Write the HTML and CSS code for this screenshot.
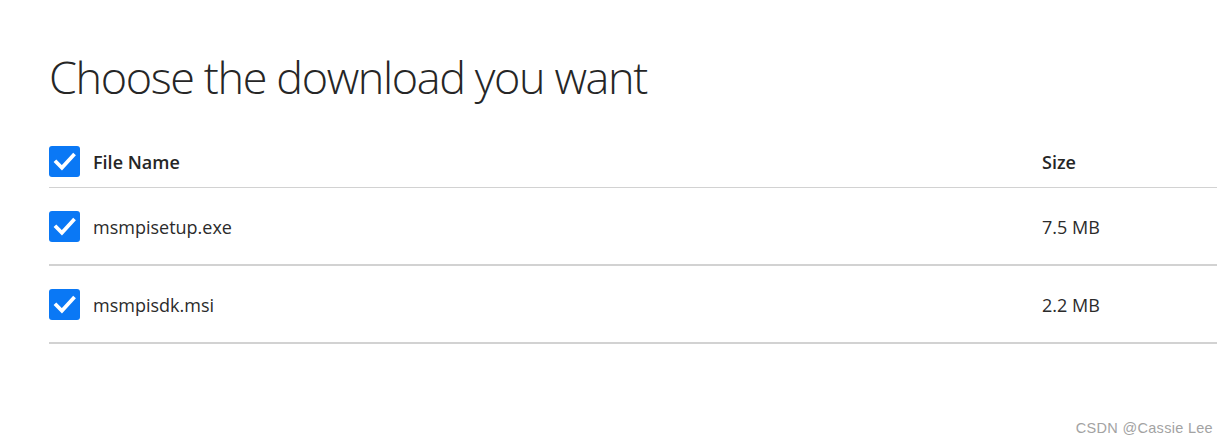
FILE: index.html
```html
<!DOCTYPE html>
<html lang="en">
<head>
<meta charset="utf-8">
<title>Choose the download you want</title>
<link rel="stylesheet" href="styles.css">
</head>
<body>
<main class="page">
  <h1 class="title">Choose the download you want</h1>
  <div class="table">
    <div class="row head">
      <div class="name-cell">
        <span class="check"><svg viewBox="0 0 30 30"><path d="M7 15.5 L12.5 21 L23.5 9" /></svg></span>
        <span class="label">File Name</span>
      </div>
      <div class="size-cell">Size</div>
    </div>
    <div class="row">
      <div class="name-cell">
        <span class="check"><svg viewBox="0 0 30 30"><path d="M7 15.5 L12.5 21 L23.5 9" /></svg></span>
        <span class="label">msmpisetup.exe</span>
      </div>
      <div class="size-cell">7.5 MB</div>
    </div>
    <div class="row">
      <div class="name-cell">
        <span class="check"><svg viewBox="0 0 30 30"><path d="M7 15.5 L12.5 21 L23.5 9" /></svg></span>
        <span class="label">msmpisdk.msi</span>
      </div>
      <div class="size-cell">2.2 MB</div>
    </div>
  </div>
  <div class="watermark">CSDN @Cassie Lee</div>
</main>
</body>
</html>
```

FILE: styles.css
```css
html, body {
  margin: 0;
  padding: 0;
  background: #ffffff;
}

body {
  font-family: "Open Sans", "Noto Sans", sans-serif;
  color: #2f2f2f;
}

.page {
  width: 1228px;
  height: 443px;
  box-sizing: border-box;
  padding: 47px 11px 0 49px;
  display: flex;
  flex-direction: column;
}

.title {
  margin: 0;
  font-family: "Open Sans", "Noto Sans", sans-serif;
  font-weight: 300;
  font-size: 45px;
  line-height: 60px;
  color: #262626;
  letter-spacing: -1.4px;
}

.table {
  margin-top: 29px;
  display: flex;
  flex-direction: column;
}

.row {
  display: grid;
  grid-template-columns: 1fr 175px;
  align-items: center;
  height: 76px;
  border-bottom: 2px solid #d2d2d2;
}

.row.head {
  height: 51px;
  border-bottom: 1px solid #d2d2d2;
  font-weight: 600;
}

.name-cell {
  display: flex;
  align-items: center;
  gap: 13px;
}

.check {
  width: 31px;
  height: 31px;
  border-radius: 3px;
  background: #0a78f5;
  display: flex;
  align-items: center;
  justify-content: center;
}

.check svg {
  width: 31px;
  height: 31px;
  fill: none;
  stroke: #ffffff;
  stroke-width: 3.6;
  stroke-linecap: square;
  stroke-linejoin: miter;
}

.label, .size-cell {
  font-size: 18px;
  color: #2b2b2b;
  padding-top: 2px;
}

.head .label, .head .size-cell {
  font-size: 18px;
  font-weight: 600;
  color: #262626;
  padding-top: 0;
}

.watermark {
  margin-top: auto;
  align-self: flex-end;
  margin-right: 4px;
  margin-bottom: 7px;
  font-family: "Liberation Sans", Arial, sans-serif;
  font-size: 14.5px;
  color: #a3a3a3;
  letter-spacing: 0.3px;
}
```
